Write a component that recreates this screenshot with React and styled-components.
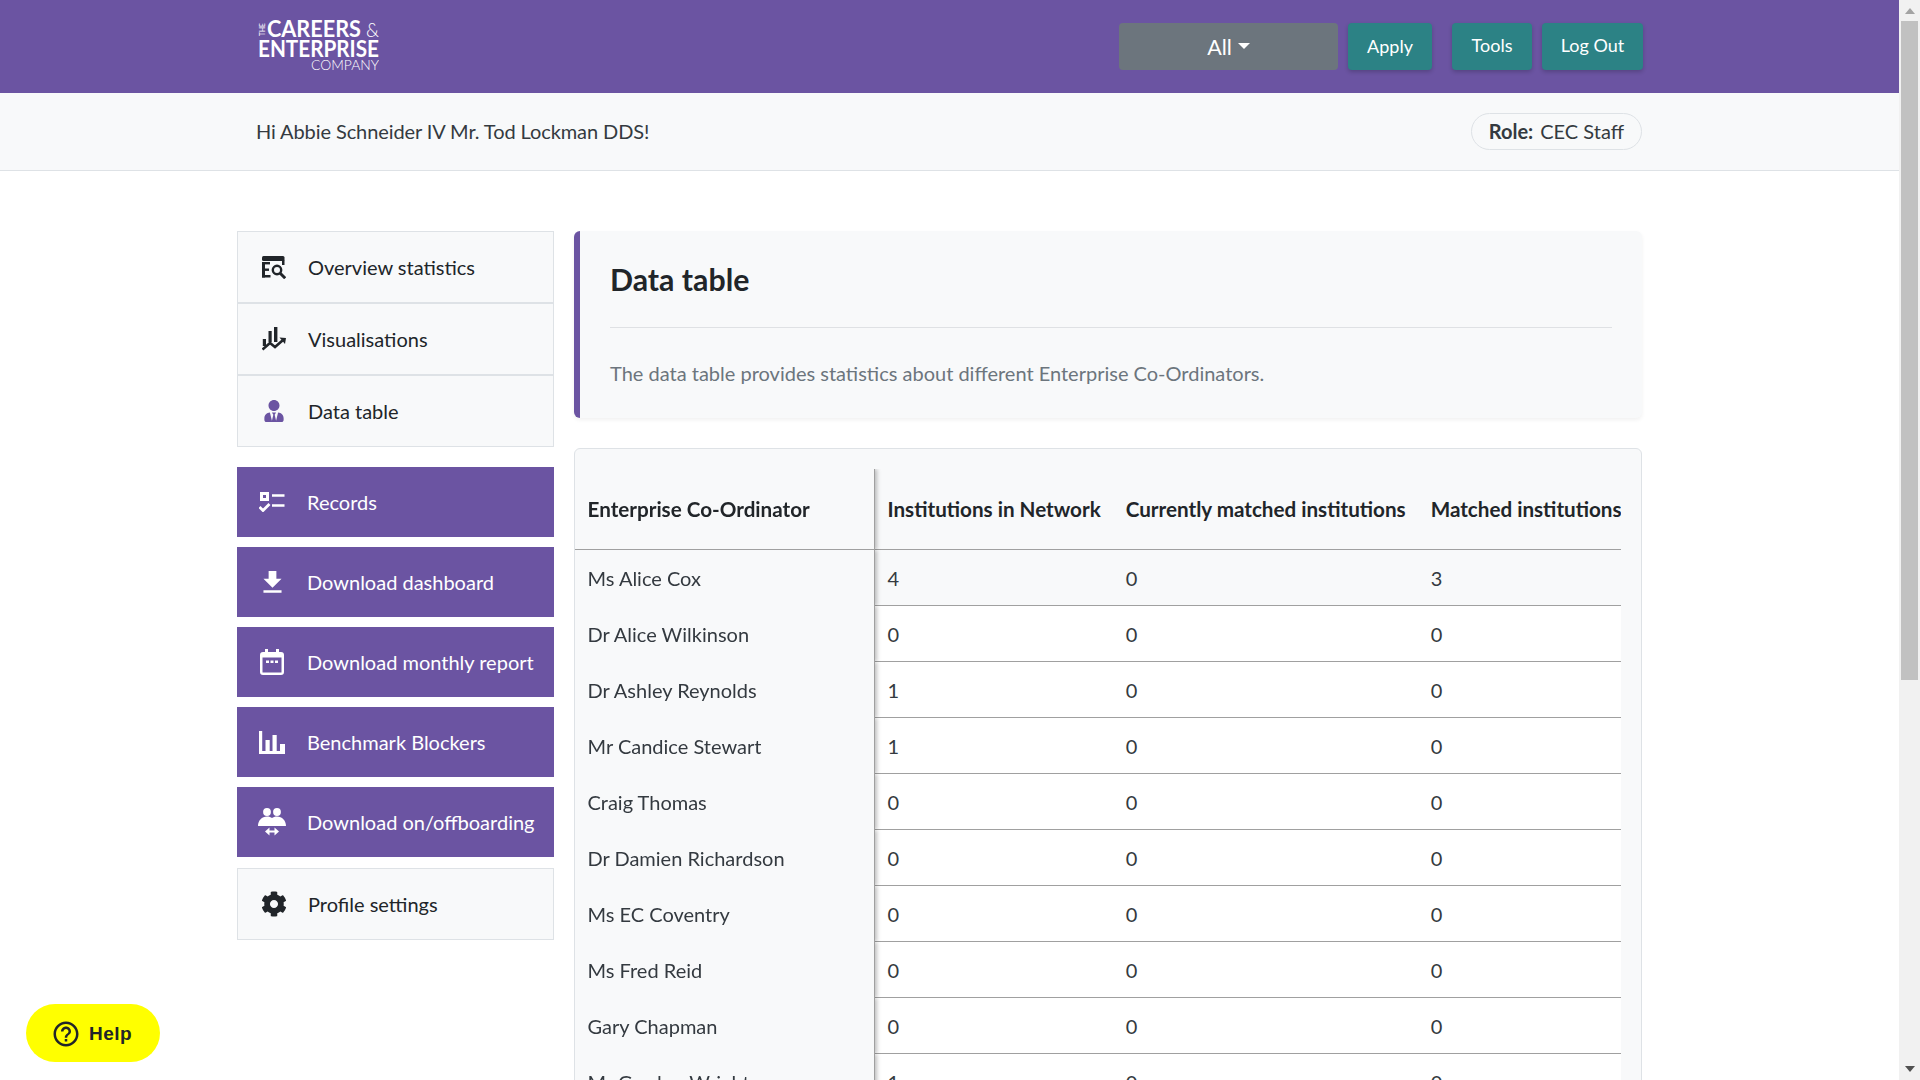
import React from "react";
import styled, { createGlobalStyle } from "styled-components";
import { FaCog, FaUserTie } from "react-icons/fa";
import { MdFileDownload, MdHelpOutline } from "react-icons/md";

const GlobalStyle = createGlobalStyle`
  body {
    margin: 0;
    background: #fff;
    color: #212529;
    font-family: Lato, "Liberation Sans", sans-serif;
    font-size: 20px;
  }
  * {
    box-sizing: border-box;
  }
`;

const Page = styled.div`
  min-height: 1701px;
  margin-right: 21px;
`;

const TopBar = styled.header`
  height: 93px;
  background: #6b54a2;
  display: flex;
  align-items: center;
  justify-content: space-between;
  padding: 0 256px 0 258px;
`;

const LogoMark = styled.svg`
  display: block;
  fill: #fff;
  font-family: Lato, sans-serif;
`;

const TopActions = styled.div`
  display: flex;
  gap: 10px;
`;

const Dropdown = styled.button`
  width: 219px;
  height: 47px;
  margin: 0;
  padding: 0;
  border: 0;
  border-radius: 4px;
  background: #6c757d;
  color: #fff;
  font: 400 21.500px Lato, sans-serif;
  display: flex;
  align-items: center;
  justify-content: center;
  gap: 6px;
`;

const Caret = styled.span`
  width: 0;
  height: 0;
  border-left: 6px solid transparent;
  border-right: 6px solid transparent;
  border-top: 6px solid #fff;
  margin-top: -2px;
`;

const TealButton = styled.button`
  height: 47px;
  width: ${(p) => p.width}px;
  margin-left: ${(p) => p.gapLeft || 0}px;
  padding: 0 0 ${(p) => p.lift || 0}px;
  border: 0;
  border-radius: 4px;
  background: #2c8285;
  color: #fff;
  font: 400 18px Lato, sans-serif;
  box-shadow: 0 2px 4px rgba(0, 0, 0, 0.2);
`;

const SubBar = styled.div`
  height: 78px;
  background: #f8f9fa;
  border-bottom: 1px solid #dee2e6;
  display: flex;
  align-items: center;
  justify-content: space-between;
  padding: 0 257px 0 256px;
  color: #343a40;
`;

const Greeting = styled.span`
  letter-spacing: -0.09px;
  margin-top: -2px;
`;

const RolePill = styled.div`
  height: 37px;
  padding: 0 17px 2px 17px;
  border: 1px solid #dee2e6;
  border-radius: 19px;
  display: flex;
  align-items: center;
  gap: 7px;
`;

const RoleLabel = styled.b`
  font-weight: 700;
`;

const Content = styled.main`
  display: flex;
  gap: 20px;
  width: 1405px;
  margin-left: 237px;
  padding-top: 60px;
  align-items: flex-start;
`;

const Sidebar = styled.nav`
  width: 317px;
  flex: none;
  display: flex;
  flex-direction: column;
`;

const NavGroup = styled.div`
  border: 1px solid #dee2e6;
  background: #f8f9fa;
  margin-bottom: 20px;
`;

const NavItem = styled.div`
  height: ${(p) => p.height || 72}px;
  display: flex;
  align-items: center;
  background: #f8f9fa;
  color: #212529;
  & + & {
    border-top: 2px solid #dee2e6;
  }
`;

const LoneItem = styled(NavItem)`
  border: 1px solid #dee2e6;
  margin-top: 1px;
`;

const ActionItem = styled.div`
  height: 70px;
  display: flex;
  align-items: center;
  background: #6b54a2;
  color: #fff;
  margin-bottom: 10px;
`;

const IconSlot = styled.span`
  width: 40px;
  display: flex;
  justify-content: center;
  align-items: center;
  margin: 0 ${(p) => (p.light ? 14 : 15)}px 0 ${(p) => (p.light ? 16 : 15)}px;
  color: ${(p) => p.color || "inherit"};
`;

const MainColumn = styled.section`
  flex: 1;
  min-width: 0;
`;

const IntroCard = styled.div`
  height: 187px;
  background: #f8f9fa;
  border-left: 6px solid #6b54a2;
  border-radius: 6px;
  padding: 0 30px;
  box-shadow: 0 2px 4px rgba(0, 0, 0, 0.06);
  margin-bottom: 30px;
`;

const Title = styled.h1`
  margin: 0;
  height: 97px;
  display: flex;
  align-items: center;
  border-bottom: 1px solid #dfe1e4;
  font-size: 30.300px;
  font-weight: 700;
  color: #212529;
`;

const Description = styled.p`
  margin: 0;
  height: 89px;
  display: flex;
  align-items: center;
  color: #6c757d;
`;

const TableCard = styled.div`
  background: #f8f9fa;
  border: 1px solid #dee2e6;
  border-radius: 6px;
  padding: 20px 20px 0 0;
`;

const TableScroll = styled.div`
  overflow: hidden;
`;

const Table = styled.table`
  border-collapse: separate;
  border-spacing: 0;
  white-space: nowrap;
  color: #343a40;
`;

const HeadCell = styled.th`
  height: 81px;
  padding: 0 12.500px;
  text-align: left;
  font-size: 20.650px;
  font-weight: 700;
  color: #212529;
  background: #f8f9fa;
  border-bottom: 1px solid #a0a0a0;
`;

const StickyHead = styled(HeadCell)`
  position: sticky;
  left: 0;
  z-index: 1;
  width: 300px;
  min-width: 300px;
  border-right: 1px solid #a0a0a0;
  box-shadow: 2px 0 4px rgba(0, 0, 0, 0.25);
  clip-path: inset(0 -10px 0 0);
`;

const Cell = styled.td`
  height: 56px;
  padding: 0 12.500px;
  background: ${(p) => (p.first ? "#f8f9fa" : "#fff")};
  border-bottom: 1px solid #a0a0a0;
`;

const StickyCell = styled.td`
  position: sticky;
  left: 0;
  z-index: 1;
  height: 56px;
  padding: 0 12.500px;
  background: #f8f9fa;
  border-right: 1px solid #a0a0a0;
  box-shadow: 2px 0 4px rgba(0, 0, 0, 0.25);
  clip-path: inset(0 -10px 0 0);
`;

const HelpButton = styled.button`
  position: fixed;
  left: 26px;
  bottom: 18px;
  width: 134px;
  height: 58px;
  border: 0;
  border-radius: 29px;
  background: #ffff00;
  color: #212529;
  display: flex;
  align-items: center;
  justify-content: center;
  gap: 8px;
  padding: 1px 3px 0 0;
  font: 700 19px "Liberation Sans", sans-serif;
  letter-spacing: 0.5px;
`;

const ScrollTrack = styled.div`
  position: fixed;
  top: 0;
  right: 0;
  bottom: 0;
  width: 21px;
  background: #f1f1f1;
  display: flex;
  flex-direction: column;
  align-items: center;
`;

const ScrollArrow = styled.span`
  flex: none;
  width: 0;
  height: 0;
  margin: ${(p) => (p.down ? "auto 0 8px" : "8px 0")};
  border-left: 5px solid transparent;
  border-right: 5px solid transparent;
  border-bottom: ${(p) => (p.down ? "0" : "6px solid #a3a3a3")};
  border-top: ${(p) => (p.down ? "6px solid #505050" : "0")};
`;

const ScrollThumb = styled.span`
  flex: none;
  width: 17px;
  height: 659px;
  margin-top: -1px;
  background: #c1c1c1;
`;

const CareersLogo = () => (
  <LogoMark width="121" height="66" viewBox="0 0 121 66" role="img">
    <text transform="translate(7 22) rotate(-90)" fontSize="7" textLength="13" lengthAdjust="spacingAndGlyphs">THE</text>
    <text x="9" y="23" fontSize="22" fontWeight="700" textLength="94" lengthAdjust="spacingAndGlyphs">CAREERS</text>
    <text x="108" y="23" fontSize="19" fontWeight="300" textLength="13" lengthAdjust="spacingAndGlyphs">&amp;</text>
    <text x="0" y="43" fontSize="22.500" fontWeight="700" textLength="121" lengthAdjust="spacingAndGlyphs">ENTERPRISE</text>
    <text x="53" y="56" fontSize="13.500" fontWeight="300" textLength="68" lengthAdjust="spacingAndGlyphs">COMPANY</text>
  </LogoMark>
);

const OverviewIcon = () => (
  <svg width="24" height="23" viewBox="0 0 24 23" fill="#212529">
    <rect x="0" y="0" width="22.500" height="5" rx="1.500" />
    <rect x="20" y="4" width="2.500" height="5" />
    <rect x="0" y="6" width="3" height="15.500" />
    <rect x="0" y="6" width="8" height="2.400" />
    <rect x="0" y="12.500" width="7" height="2.400" />
    <rect x="0" y="19" width="8.500" height="2.500" />
    <circle cx="15" cy="14" r="4.200" fill="none" stroke="#212529" strokeWidth="2.400" />
    <path d="M18.200 17.200l5 5" stroke="#212529" strokeWidth="3" />
  </svg>
);

const VisualIcon = () => (
  <svg width="24" height="24" viewBox="0 0 24 24" fill="#212529">
    <rect x="0.800" y="12" width="3.200" height="7" />
    <rect x="6.500" y="4" width="3.200" height="11" />
    <rect x="12" y="0" width="3.400" height="15" />
    <path d="M0.500 22.500L8 16l5 4 7.500-6.500" fill="none" stroke="#212529" strokeWidth="2.600" />
    <path d="M17.500 10.500l6.500.500-1 6z" />
  </svg>
);

const RecordsIcon = () => (
  <svg width="26" height="20" viewBox="0 0 26 20" fill="none" stroke="#fff">
    <rect x="2.500" y="1.500" width="6" height="6" strokeWidth="3" />
    <path d="M0.500 15l3.500 3.500 6.500-6.500" strokeWidth="2.800" />
    <path d="M13 3.500h12.500M13 13.500h12.500" strokeWidth="2.600" />
  </svg>
);

const CalendarIcon = () => (
  <svg width="24" height="26" viewBox="0 0 24 26">
    <path d="M5 0h3v3h8V0h3v3h2a3 3 0 0 1 3 3v17a3 3 0 0 1-3 3H3a3 3 0 0 1-3-3V6a3 3 0 0 1 3-3h2z" fill="#fff" />
    <rect x="2.500" y="8.500" width="19" height="15" fill="#6b54a2" />
    <rect x="6" y="11.500" width="3" height="2.500" fill="#fff" />
    <rect x="10.500" y="11.500" width="3" height="2.500" fill="#fff" />
    <rect x="15" y="11.500" width="3" height="2.500" fill="#fff" />
  </svg>
);

const BarsIcon = () => (
  <svg width="26" height="23" viewBox="0 0 26 23" fill="#fff">
    <rect x="0" y="0" width="3.200" height="23" />
    <rect x="0" y="20" width="26" height="3" />
    <rect x="6.500" y="9" width="4.200" height="12" />
    <rect x="13.500" y="4" width="4.200" height="17" />
    <rect x="21" y="13" width="5" height="8" />
  </svg>
);

const PeopleIcon = () => (
  <svg width="28" height="28" viewBox="0 0 28 28" fill="#fff">
    <circle cx="9" cy="4" r="3.900" />
    <circle cx="19" cy="4" r="3.900" />
    <path d="M0 18c0-5.500 4-9.500 9-9.500 2 0 4 .6 5 1.500 1-.9 3-1.500 5-1.500 5 0 9 4 9 9.500z" />
    <path d="M7 23.500l4.500-4v3h5v-3l4.500 4-4.500 4v-3h-5v3z" />
  </svg>
);

const lightItems = [
  { label: "Overview statistics", icon: <OverviewIcon />, height: 70 },
  { label: "Visualisations", icon: <VisualIcon />, height: 72 },
  { label: "Data table", icon: <FaUserTie size={22} />, color: "#6b54a2", height: 72 },
];

const actionItems = [
  { label: "Records", icon: <RecordsIcon /> },
  { label: "Download dashboard", icon: <MdFileDownload size={31} /> },
  { label: "Download monthly report", icon: <CalendarIcon /> },
  { label: "Benchmark Blockers", icon: <BarsIcon /> },
  { label: "Download on/offboarding", icon: <PeopleIcon /> },
];

const rows = [
  ["Ms Alice Cox", 4, 0, 3],
  ["Dr Alice Wilkinson", 0, 0, 0],
  ["Dr Ashley Reynolds", 1, 0, 0],
  ["Mr Candice Stewart", 1, 0, 0],
  ["Craig Thomas", 0, 0, 0],
  ["Dr Damien Richardson", 0, 0, 0],
  ["Ms EC Coventry", 0, 0, 0],
  ["Ms Fred Reid", 0, 0, 0],
  ["Gary Chapman", 0, 0, 0],
  ["Mr Gordon Wright", 1, 0, 0],
];

export default function App() {
  return (
    <Page>
      <GlobalStyle />
      <TopBar>
        <CareersLogo />
        <TopActions>
          <Dropdown>
            All <Caret />
          </Dropdown>
          <TealButton width={84} lift={1}>Apply</TealButton>
          <TealButton width={80} gapLeft={10} lift={3}>Tools</TealButton>
          <TealButton width={101} lift={3}>Log Out</TealButton>
        </TopActions>
      </TopBar>

      <SubBar>
        <Greeting>Hi Abbie Schneider IV Mr. Tod Lockman DDS!</Greeting>
        <RolePill>
          <RoleLabel>Role:</RoleLabel> CEC Staff
        </RolePill>
      </SubBar>

      <Content>
        <Sidebar>
          <NavGroup>
            {lightItems.map((item) => (
              <NavItem key={item.label} height={item.height}>
                <IconSlot light color={item.color}>{item.icon}</IconSlot>
                {item.label}
              </NavItem>
            ))}
          </NavGroup>
          {actionItems.map((item) => (
            <ActionItem key={item.label}>
              <IconSlot>{item.icon}</IconSlot>
              {item.label}
            </ActionItem>
          ))}
          <LoneItem>
            <IconSlot light><FaCog size={26} /></IconSlot>
            Profile settings
          </LoneItem>
        </Sidebar>

        <MainColumn>
          <IntroCard>
            <Title>Data table</Title>
            <Description>
              The data table provides statistics about different Enterprise Co-Ordinators.
            </Description>
          </IntroCard>

          <TableCard>
            <TableScroll>
              <Table>
                <thead>
                  <tr>
                    <StickyHead>Enterprise Co-Ordinator</StickyHead>
                    <HeadCell>Institutions in Network</HeadCell>
                    <HeadCell>Currently matched institutions</HeadCell>
                    <HeadCell>Matched institutions</HeadCell>
                  </tr>
                </thead>
                <tbody>
                  {rows.map(([name, network, current, matched], i) => (
                    <tr key={name}>
                      <StickyCell>{name}</StickyCell>
                      <Cell first={i === 0}>{network}</Cell>
                      <Cell first={i === 0}>{current}</Cell>
                      <Cell first={i === 0}>{matched}</Cell>
                    </tr>
                  ))}
                </tbody>
              </Table>
            </TableScroll>
          </TableCard>
        </MainColumn>
      </Content>

      <HelpButton>
        <MdHelpOutline size={30} />
        Help
      </HelpButton>

      <ScrollTrack>
        <ScrollArrow />
        <ScrollThumb />
        <ScrollArrow down />
      </ScrollTrack>
    </Page>
  );
}
